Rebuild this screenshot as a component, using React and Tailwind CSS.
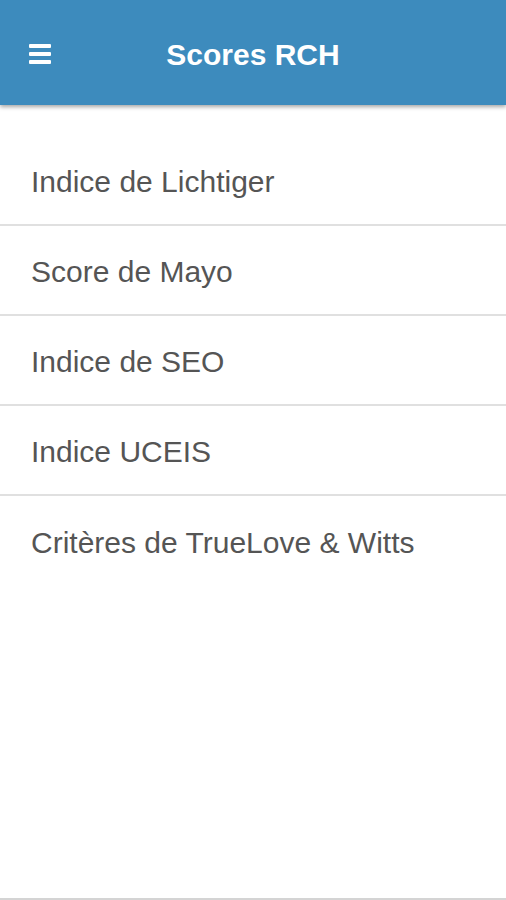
export default function App() {
  const items = [
    "Indice de Lichtiger",
    "Score de Mayo",
    "Indice de SEO",
    "Indice UCEIS",
    "Critères de TrueLove & Witts",
  ];
  return (
    <div className="h-[900px] w-[506px] flex flex-col bg-white border-b-2 border-[#d4d4d4] overflow-hidden" style={{ fontFamily: '"Liberation Sans", Arial, sans-serif' }}>
      <header className="h-[105px] shrink-0 bg-[#3d8bbd] flex items-center relative shadow-[0_2px_4px_rgba(0,0,0,0.35)] z-10">
        <div className="absolute left-[29px] top-[44px] flex flex-col gap-[4px]">
          <div className="w-[22px] h-[4px] bg-white rounded-[1px]"></div>
          <div className="w-[22px] h-[4px] bg-white rounded-[1px]"></div>
          <div className="w-[22px] h-[4px] bg-white rounded-[1px]"></div>
        </div>
        <h1 className="w-full text-center text-white font-bold text-[30px] pt-[3px]">Scores RCH</h1>
      </header>
      <ul className="mt-[31px] flex flex-col">
        {items.map((t, i) => (
          <li key={t} className={`h-[90px] flex items-center pl-[31px] pt-[2px] text-[30px] text-[#555555] ${i < items.length - 1 ? "border-b-2 border-[#e0e0e0]" : ""}`}>
            {t}
          </li>
        ))}
      </ul>
    </div>
  );
}
